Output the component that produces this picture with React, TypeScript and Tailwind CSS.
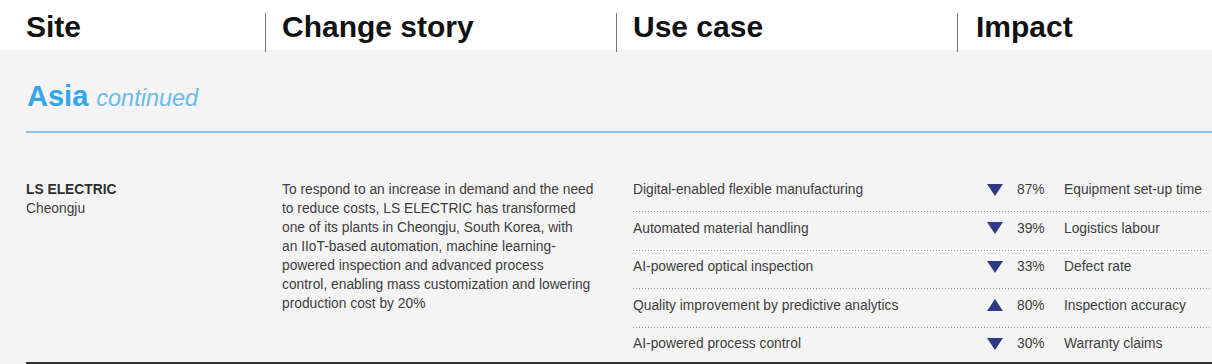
const useCases = [
  { name: "Digital-enabled flexible manufacturing", dir: "down", value: "87%", kpi: "Equipment set-up time" },
  { name: "Automated material handling", dir: "down", value: "39%", kpi: "Logistics labour" },
  { name: "AI-powered optical inspection", dir: "down", value: "33%", kpi: "Defect rate" },
  { name: "Quality improvement by predictive analytics", dir: "up", value: "80%", kpi: "Inspection accuracy" },
  { name: "AI-powered process control", dir: "down", value: "30%", kpi: "Warranty claims" },
];

const storyLines = [
  "To respond to an increase in demand and the need",
  "to reduce costs, LS ELECTRIC has transformed",
  "one of its plants in Cheongju, South Korea, with",
  "an IIoT-based automation, machine learning-",
  "powered inspection and advanced process",
  "control, enabling mass customization and lowering",
  "production cost by 20%",
];

const Arrow = ({ dir }: { dir: string }) => (
  <svg width="16" height="12" viewBox="0 0 16 12" className="block">
    {dir === "up" ? (
      <polygon points="8,0 16,12 0,12" fill="#2e3a86" />
    ) : (
      <polygon points="0,0 16,0 8,12" fill="#2e3a86" />
    )}
  </svg>
);

const HeaderCell = ({ label, first, pad }: { label: string; first?: boolean; pad: string }) => (
  <div className={`mt-[13px] h-[39px] ${first ? "" : "border-l border-[#7a7a7a]"} ${pad}`}>
    <div className="pt-[2px] text-[30px] leading-[24px] font-bold text-[#111] whitespace-nowrap">
      {label}
    </div>
  </div>
);

export default function App() {
  return (
    <div className="w-full h-[364px] overflow-hidden bg-[#f4f4f4] font-['Liberation_Sans',Arial,sans-serif]">
      {/* Header */}
      <div className="relative z-10 h-[50px] bg-white px-[26px] grid grid-cols-[239px_351px_341px_1fr]">
        <HeaderCell label="Site" first pad="" />
        <HeaderCell label="Change story" pad="pl-[16px]" />
        <HeaderCell label="Use case" pad="pl-[16px]" />
        <HeaderCell label="Impact" pad="pl-[18px]" />
      </div>

      {/* Region */}
      <div className="pl-[26px] pt-[28px]">
        <div className="h-[36px] flex items-baseline gap-[8px] pl-[1px] leading-[36px] whitespace-nowrap">
          <span className="text-[29px] font-bold text-[#33a5e8]">Asia</span>
          <span className="text-[23.5px] italic text-[#6cb9ee]">continued</span>
        </div>
        <div className="mt-[17px] h-[2px] bg-[#8cc3ec]" />

        {/* Row */}
        <div className="mt-[40.5px] grid grid-cols-[256px_351px_1fr] border-b-2 border-[#333] text-[13.8px] leading-[19px] text-[#3d3d3d]">
          <div className="pt-[6.5px]">
            <div className="font-bold text-[#2e2e2e]">LS ELECTRIC</div>
            <div>Cheongju</div>
          </div>
          <div className="pt-[6.5px] whitespace-nowrap">
            {storyLines.map((l) => (
              <div key={l}>{l}</div>
            ))}
          </div>
          <div>
            {useCases.map((u, i) => (
              <div key={u.name}>
                <div className={`grid grid-cols-[354px_30px_47px_1fr] items-center pt-[6.5px] ${i === useCases.length - 1 ? "pb-[9px]" : "pb-[12px]"}`}>
                  <div className="whitespace-nowrap">{u.name}</div>
                  <Arrow dir={u.dir} />
                  <div>{u.value}</div>
                  <div className="whitespace-nowrap">{u.kpi}</div>
                </div>
                {i < useCases.length - 1 && (
                  <div className="h-px bg-[repeating-linear-gradient(to_right,#9c9c9c_0_1px,transparent_1px_3px)]" />
                )}
              </div>
            ))}
          </div>
        </div>
      </div>
    </div>
  );
}
